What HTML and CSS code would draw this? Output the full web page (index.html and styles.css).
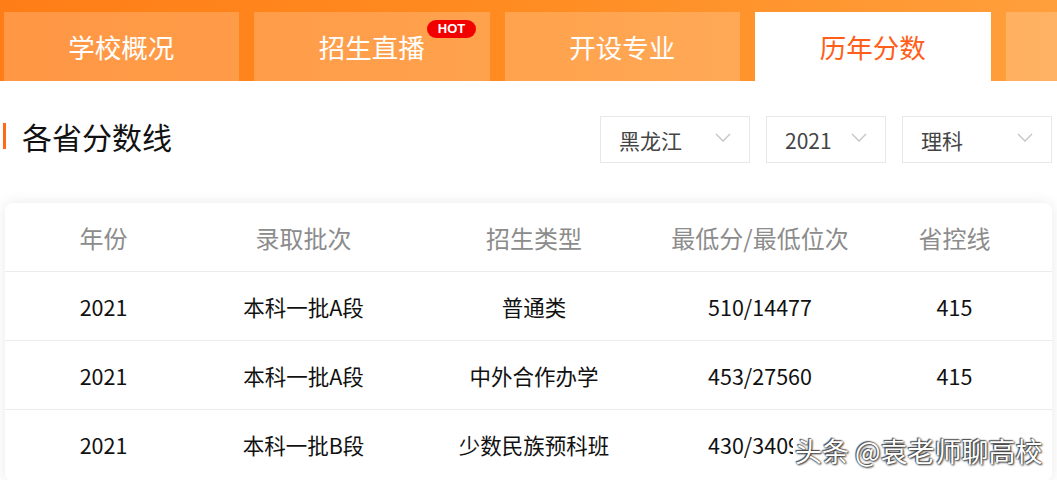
FILE: index.html
```html
<!DOCTYPE html>
<html lang="zh">
<head>
<meta charset="utf-8">
<link rel="stylesheet" href="styles.css">
</head>
<body>
<div class="page">
  <div class="tabbar">
    <div class="tab">学校概况</div>
    <div class="tab">招生直播<span class="hot">HOT</span></div>
    <div class="tab">开设专业</div>
    <div class="tab active">历年分数</div>
    <div class="tab partial"></div>
  </div>
  <div class="head">
    <div class="title">各省分数线</div>
    <div class="filters">
      <div class="select w150"><span>黑龙江</span><svg class="chev" viewBox="0 0 16 10"><path d="M1 1 L8 8 L15 1" fill="none" stroke="#c4c4c4" stroke-width="1.3"/></svg></div>
      <div class="select w120"><span>2021</span><svg class="chev" viewBox="0 0 16 10"><path d="M1 1 L8 8 L15 1" fill="none" stroke="#c4c4c4" stroke-width="1.3"/></svg></div>
      <div class="select w150"><span>理科</span><svg class="chev" viewBox="0 0 16 10"><path d="M1 1 L8 8 L15 1" fill="none" stroke="#c4c4c4" stroke-width="1.3"/></svg></div>
    </div>
  </div>
  <div class="card">
    <div class="row header">
      <div>年份</div><div>录取批次</div><div>招生类型</div><div>最低分/最低位次</div><div>省控线</div>
    </div>
    <div class="row">
      <div>2021</div><div>本科一批A段</div><div>普通类</div><div>510/14477</div><div>415</div>
    </div>
    <div class="row">
      <div>2021</div><div>本科一批A段</div><div>中外合作办学</div><div>453/27560</div><div>415</div>
    </div>
    <div class="row last">
      <div>2021</div><div>本科一批B段</div><div>少数民族预科班</div><div>430/34099</div><div>415</div>
    </div>
  </div>
  <div class="watermark">头条 @袁老师聊高校</div>
</div>
</body>
</html>
```

FILE: styles.css
```css
* { box-sizing: border-box; }
html, body { margin: 0; padding: 0; background: #fff; }
body {
  font-family: "Microsoft YaHei", "Noto Sans CJK SC", "Noto Sans", sans-serif;
  width: 1057px;
  height: 480px;
  overflow: hidden;
}
.page { position: relative; width: 1057px; height: 480px; }

.tabbar {
  display: flex;
  gap: 15px;
  height: 81px;
  padding: 12px 0 0 3.5px;
  background: linear-gradient(90deg, #ff7d16 0%, #ff8c22 50%, #ff9f3c 100%);
  overflow: hidden;
}
.tab {
  position: relative;
  flex: 0 0 235.5px;
  height: 69px;
  display: flex;
  align-items: center;
  justify-content: center;
  color: #fff;
  font-size: 26.5px;
  background: rgba(255, 255, 255, 0.2);
}
.tab.active { background: #fff; color: #ff5f1a; }
.tab.partial { flex: 0 0 60px; }
.hot {
  position: absolute;
  left: 173px;
  top: 8px;
  width: 49px;
  height: 18px;
  border-radius: 9px;
  background: #f20000;
  color: #fff;
  text-align: center;
  font-family: "Liberation Sans", Arial, sans-serif;
  font-weight: bold;
  font-size: 13px;
  line-height: 18px;
}

.head {
  display: flex;
  justify-content: space-between;
  align-items: center;
  height: 122px;
  padding: 0 5px 0 3px;
}
.title {
  border-left: 3px solid #ff6a1a;
  padding-left: 16px;
  font-size: 30px;
  line-height: 26px;
  color: #111;
  margin-top: -13px;
}
.filters { display: flex; gap: 16px; margin-top: -5px; }
.select {
  height: 47px;
  border: 1px solid #e8e8e8;
  display: flex;
  align-items: center;
  justify-content: space-between;
  padding: 0 18px 0 18px;
  font-size: 21px;
  color: #444;
}
.w150 { width: 150px; }
.w120 { width: 120px; }
.chev { width: 16px; height: 10px; margin-top: -4px; }

.card {
  margin: 0 5px 0 5px;
  background: #fff;
  border-radius: 8px;
  box-shadow: 0 0 14px rgba(0, 0, 0, 0.09);
  height: 278px;
}
.row {
  display: grid;
  grid-template-columns: 197px 203px 258px 194px 195px;
  height: 69px;
  align-items: center;
  border-bottom: 1px solid #ececec;
  font-size: 21.5px;
  color: #111;
  text-align: center;
}
.row.header { font-size: 24px; color: #8c8c8c; }
.row.last { border-bottom: none; }

.watermark {
  position: absolute;
  left: 793px;
  top: 430px;
  padding: 4px 8px 6px 2px;
  background: #fff;
  font-size: 27px;
  line-height: 34px;
  color: #fff;
  text-shadow: 0 0 2px #333, 1px 1px 2px #333, -1px -1px 1px #555;
}
```
